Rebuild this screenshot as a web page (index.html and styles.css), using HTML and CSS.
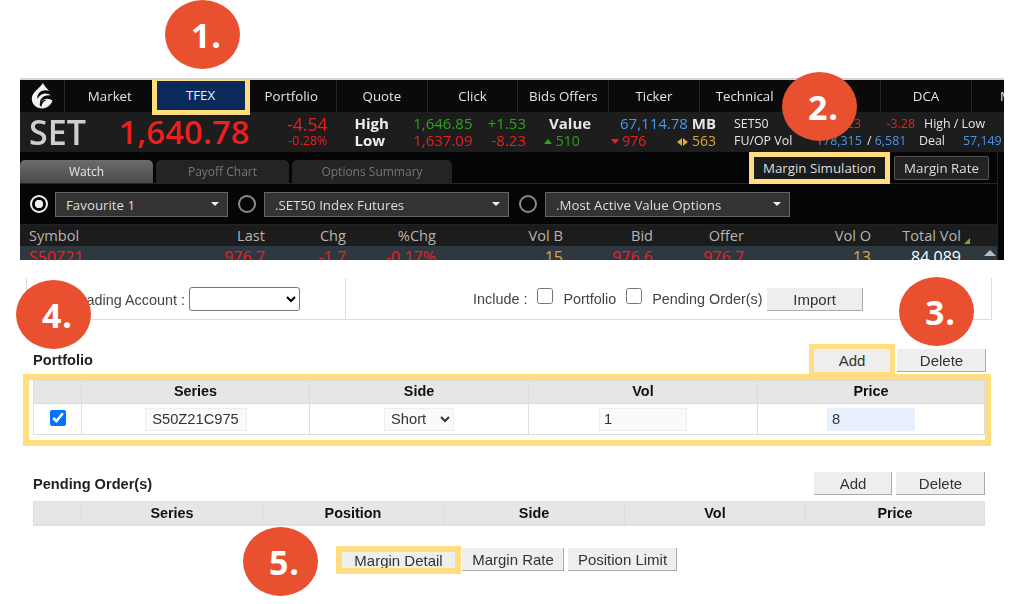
FILE: index.html
```html
<!DOCTYPE html>
<html lang="en">
<head>
<meta charset="utf-8">
<title>Margin Simulation</title>
<link rel="stylesheet" href="styles.css">
</head>
<body>
<div class="page">
  <section class="terminal">
    <nav class="nav">
      <div class="logo">
        <svg width="22" height="26" viewBox="0 0 22 26">
          <path fill="#f2f2f2" d="M12 0C13 3 16 5 18 8C15 6.500 11 7 8.500 9.500C6.500 11.500 6 14 6.500 16C7.500 13.500 10 11 13.500 10.500C16 10.200 18.500 11 20 12.500C16.500 11.800 12.500 13 10.500 15.500C9 17.300 8.800 19 9.200 20.500C10.500 18 13 16 16 15.800C18 15.700 20 16.400 21.500 17.800C20 22 16 25.500 11.500 25.500C5.500 25.500 .8 21.500 .8 15.800C.8 9.500 8 6 12 0Z"/>
          <path fill="#0a0a0a" d="M8.700 20.800C10 18.400 12.500 16.800 15.800 16.700C12.800 18 10.800 20.500 10.300 24C9.200 23.300 8.600 22 8.700 20.800Z"/>
        </svg>
      </div>
      <div class="nav-item">Market</div>
      <div class="nav-item"><span class="nav-active">TFEX</span></div>
      <div class="nav-item">Portfolio</div>
      <div class="nav-item">Quote</div>
      <div class="nav-item">Click</div>
      <div class="nav-item">Bids Offers</div>
      <div class="nav-item">Ticker</div>
      <div class="nav-item">Technical</div>
      <div class="nav-item"></div>
      <div class="nav-item">DCA</div>
      <div class="nav-item nav-cut">M</div>
    </nav>

    <div class="index">
      <div class="idx-name">SET</div>
      <div class="idx-price">1,640.78</div>
      <div class="idx-chg"><div class="red big">-4.54</div><div class="red small">-0.28%</div></div>
      <div class="idx-label"><div>High</div><div>Low</div></div>
      <div class="idx-val"><div class="green">1,646.85</div><div class="red">1,637.09</div></div>
      <div class="idx-diff"><div class="green">+1.53</div><div class="red">-8.23</div></div>
      <div class="idx-value">
        <div class="val-top"><b class="val-title">Value</b><span><span class="blue">67,114.78</span> <b>MB</b></span></div>
        <div class="val-bot">
          <span class="green"><i class="tri up"></i> 510</span>
          <span class="red"><i class="tri down"></i> 976</span>
          <span class="yellow"><i class="tri left"></i><i class="tri right"></i> 563</span>
        </div>
      </div>
      <div class="idx-set50">
        <div class="s-top"><span class="s-l">SET50</span><span class="red s-v">23</span><span class="red s-c">-3.28</span><span class="s-r">High / Low</span></div>
        <div class="s-bot"><span class="s-l">FU/OP Vol</span><span class="blue s-v"><span>178,315</span></span><span class="s-c"><span>/</span> <span class="blue">6,581</span></span><span class="s-d">Deal</span><span class="blue s-e">57,149</span></div>
      </div>
    </div>

    <div class="body">
      <div class="tabs">
        <div class="tab tab-on">Watch</div>
        <div class="tab">Payoff Chart</div>
        <div class="tab tab-wide">Options Summary</div>
        <div class="tab-actions">
          <button class="dark-btn dark-hl">Margin Simulation</button>
          <button class="dark-btn">Margin Rate</button>
        </div>
      </div>
      <div class="filters">
        <i class="radio radio-on"></i><div class="drop d1">Favourite 1</div>
        <i class="radio"></i><div class="drop d2">.SET50 Index Futures</div>
        <i class="radio"></i><div class="drop d3">.Most Active Value Options</div>
      </div>
      <div class="grid grid-head">
        <span class="left">Symbol</span><span>Last</span><span>Chg</span><span>%Chg</span><span>Vol B</span><span>Bid</span><span>Offer</span><span>Vol O</span><span class="sorted">Total Vol</span>
      </div>
      <div class="grid grid-row">
        <span class="left red">S50Z21</span><span class="red">976.7</span><span class="red">-1.7</span><span class="red">-0.17%</span><span class="yellow">15</span><span class="red">976.6</span><span class="red">976.7</span><span class="yellow">13</span><span class="white">84,089</span>
        <i class="scroll-up"></i>
      </div>
    </div>
  </section>

  <section class="account">
    <div class="acc-left">
      <label class="acc-label">Trading Account :</label>
      <select class="acc-select"><option></option></select>
    </div>
    <div class="acc-right">
      <span class="inc">Include :</span>
      <input type="checkbox" class="cb"><span class="inc-t">Portfolio</span>
      <input type="checkbox" class="cb"><span class="inc-t inc-p">Pending Order(s)</span>
      <button class="btn btn-import">Import</button>
    </div>
  </section>

  <section class="sheet">
    <div class="head head-port">
      <h2 class="title">Portfolio</h2>
      <div class="head-btns">
        <button class="btn btn-add btn-hl">Add</button>
        <button class="btn btn-del">Delete</button>
      </div>
    </div>
    <div class="frame">
      <table class="tbl tbl-port">
        <colgroup><col class="c1"><col class="c2"><col class="c3"><col class="c4"><col class="c5"></colgroup>
        <thead><tr><th></th><th>Series</th><th>Side</th><th>Vol</th><th>Price</th></tr></thead>
        <tbody>
          <tr>
            <td><input type="checkbox" class="cb cb-row" checked></td>
            <td><input class="field f-series" value="S50Z21C975"></td>
            <td><select class="field f-side"><option>Short</option></select></td>
            <td><input class="field f-vol" value="1"></td>
            <td><input class="field f-vol f-price" value="8"></td>
          </tr>
        </tbody>
      </table>
    </div>

    <div class="head head-pend">
      <h2 class="title">Pending Order(s)</h2>
      <div class="head-btns">
        <button class="btn btn-add">Add</button>
        <button class="btn btn-del">Delete</button>
      </div>
    </div>
    <table class="tbl tbl-pend">
      <colgroup><col class="p1"><col class="p2"><col class="p2"><col class="p2"><col class="p2"><col></colgroup>
      <thead><tr><th></th><th>Series</th><th>Position</th><th>Side</th><th>Vol</th><th>Price</th></tr></thead>
    </table>
    <div class="foot">
      <button class="btn f-detail">Margin Detail</button>
      <button class="btn f-rate">Margin Rate</button>
      <button class="btn f-limit">Position Limit</button>
    </div>
  </section>

  <div class="badge b1">1.</div>
  <div class="badge b2">2.</div>
  <div class="badge b3">3.</div>
  <div class="badge b4">4.</div>
  <div class="badge b5">5.</div>
</div>
</body>
</html>
```

FILE: styles.css
```css
* { box-sizing: border-box; }
html, body { margin: 0; padding: 0; background: #fff; }
.page { position: relative; width: 1024px; height: 604px; overflow: hidden; padding-top: 78px; font-family: "Liberation Sans", Arial, sans-serif; filter: blur(.3px); }

/* dark terminal */
.terminal { position: relative; margin-left: 20px; width: 984px; height: 182px; background: #050505; border-top: 2px solid #d4d4d4; overflow: hidden; font-family: "Open Sans", sans-serif; color: #e6e6e6; }
.nav { display: flex; height: 32px; background: #0a0a0a; }
.logo { width: 45px; flex: none; display: flex; align-items: center; justify-content: center; border-right: 1px solid #2c2c2c; }
.nav-item { width: 90.7px; flex: none; display: flex; align-items: center; justify-content: center; font-size: 13.3px; color: #e4e4e4; border-right: 1px solid #262626; }
.nav-cut { justify-content: flex-start; padding-left: 28px; border: 0; }
.nav-active { position: relative; z-index: 2; display: flex; align-items: center; justify-content: center; width: 88px; height: 29px; margin-top: -2px; background: #0a2a5c; color: #e6ecf4; outline: 5px solid #ffdd80; }

.index { display: flex; height: 40px; background: #1d1d1d; font-size: 15px; line-height: 17px; padding-top: 3px; }
.red { color: #f01e1e; }
.green { color: #2ea31a; }
.blue { color: #4a97ea; }
.yellow { color: #d9a92c; }
.white { color: #fff; }
.idx-name { width: 90px; margin-left: 9px; margin-top: -1px; font-size: 34px; line-height: 36px; font-weight: 600; color: #cfcfcf; }
.idx-price { width: 129px; margin-top: -1px; font-size: 33px; line-height: 36px; font-weight: 600; color: #f01e1e; white-space: nowrap; }
.idx-chg { width: 80px; text-align: right; }
.big { font-size: 17.5px; line-height: 18px; }
.small { font-size: 12.5px; line-height: 16px; }
.idx-label { width: 59px; margin-left: 27px; font-weight: 700; color: #eee; }
.idx-val { width: 58px; }
.idx-diff { width: 55px; text-align: right; }
.idx-value { width: 172px; margin-left: 18px; flex: none; }
.val-top { display: flex; justify-content: space-between; }
.val-title { margin-left: 5px; }
.val-bot { display: flex; justify-content: space-between; font-size: 14px; }
.tri { display: inline-block; width: 0; height: 0; vertical-align: 2px; border-style: solid; border-color: transparent; }
.tri.up { border-width: 0 4px 5px; border-bottom-color: #2ea31a; }
.tri.down { border-width: 5px 4px 0; border-top-color: #f01e1e; }
.tri.left { border-width: 4px 5px 4px 0; border-right-color: #d9a92c; vertical-align: 0; margin-right: 1px; }
.tri.right { border-width: 4px 0 4px 5px; border-left-color: #d9a92c; vertical-align: 0; }
.idx-set50 { margin-left: 18px; width: 270px; flex: none; font-size: 12.4px; white-space: nowrap; }
.s-top, .s-bot { display: flex; height: 17px; }
.s-l { width: 82px; flex: none; }
.s-top .s-v { width: 60px; padding-right: 15px; text-align: right; }
.s-top .s-c { width: 39px; text-align: right; }
.s-r { margin-left: 9px; }
.s-bot .s-v { width: 44px; flex: none; }
.s-bot .s-c { width: 44px; flex: none; margin-left: 7px; }
.s-d { margin-left: 8px; width: 44px; flex: none; }

.body { margin-right: 6px; border-right: 1px solid #222; height: 108px; }
.tabs { display: flex; align-items: flex-end; height: 32px; border-bottom: 1px solid #262626; font-size: 12px; }
.tab { width: 133px; height: 23px; margin-right: 3px; display: flex; align-items: center; justify-content: center; background: #242424; color: #777; border-radius: 5px 5px 0 0; }
.tab-on { background: linear-gradient(#6c6c6c, #4a4a4a); color: #e8e8e8; }
.tab-wide { width: 160px; margin-right: 0; }
.tab-actions { margin-left: auto; display: flex; align-items: center; gap: 9px; height: 31px; padding-right: 8px; }
.dark-btn { font-family: inherit; font-size: 13.3px; color: #ddd; height: 24px; width: 95px; padding: 0; background: #222; border: 1px solid #555; border-radius: 2px; }
.dark-hl { position: relative; width: 131px; height: 22px; background: #1c1c1c; border: 0; border-radius: 0; outline: 5px solid #ffdd80; }

.filters { display: flex; align-items: center; height: 41px; padding-left: 10px; border-bottom: 1px solid #222; }
.radio { width: 18px; height: 18px; flex: none; border-radius: 50%; border: 2px solid #8a8a8a; }
.radio-on { border-color: #eee; background: radial-gradient(circle, #eee 0 4px, transparent 4.500px); }
.drop { position: relative; height: 25px; margin-left: 8px; padding-left: 10px; background: #333; border: 1px solid #666; color: #ddd; font-size: 13.3px; line-height: 24px; }
.drop::after { content: ""; position: absolute; right: 8px; top: 9px; border-style: solid; border-width: 4px 4px 0; border-color: #eee transparent transparent; }
.d1 { width: 173px; margin-left: 7px; margin-right: 10px; }
.d2 { width: 245px; margin-right: 10px; }
.d3 { width: 245px; }

.grid { position: relative; display: grid; grid-template-columns: 100px 136px 81px 90px 127px 90px 91px 127px 90px; padding-left: 9px; }
.grid span { text-align: right; white-space: nowrap; }
.grid .left { text-align: left; }
.grid-head { height: 21px; background: #1c1c1c; font-size: 14.6px; line-height: 21px; color: #b4b4b4; }
.sorted { position: relative; }
.sorted::after { content: ""; position: absolute; right: -9px; bottom: 2px; border-style: solid; border-width: 0 0 6px 6px; border-color: transparent transparent #7aa82a; }
.grid-row { height: 20px; background: #2d3840; font-size: 16px; line-height: 23px; }
.scroll-up { position: absolute; left: 964px; top: 4px; border-style: solid; border-width: 0 6px 6px; border-color: transparent transparent #bbb; }

/* account bar */
.account { display: flex; margin: 18px 32px 0 26px; height: 42px; border: 1px solid #ddd; border-top: 0; font-size: 14.4px; color: #444; }
.acc-left { width: 319px; display: flex; align-items: flex-start; justify-content: flex-end; padding: 9px 45px 0 0; border-right: 1px solid #ddd; gap: 4px; }
.acc-label { line-height: 26px; }
.acc-select { width: 111px; height: 24px; background: #fff; border: 1px solid #767676; border-radius: 3px; }
.acc-right { display: flex; align-items: center; padding: 0 0 0 127px; height: 42px; }
.inc { margin-right: 10px; }
.cb { width: 16px; height: 16px; margin: -7px 0 0; flex: none; }
.inc-t { margin: 0 10px; }
.inc-p { margin-right: 4px; }
.btn { font-family: inherit; font-size: 15px; color: #333; background: #eee; border: 0; padding: 0; height: 23px; box-shadow: inset -1px -1px 0 #aaa; }
.btn-import { width: 96px; }

/* sheets */
.sheet { padding: 0 39px 0 33px; font-size: 14.6px; }
.head { display: flex; align-items: center; justify-content: space-between; }
.head-port { height: 24px; margin-top: 28px; }
.head-pend { height: 23px; margin-top: 26px; }
.title { margin: 0; font-size: 14.6px; font-weight: 700; color: #222; }
.head-btns { display: flex; gap: 7px; margin-right: -1px; }
.btn-add { width: 76px; }
.btn-del { width: 89px; }
.head-pend .head-btns { gap: 4px; margin-right: 0; }
.head-pend .btn-add { width: 78px; }
.btn-hl { position: relative; box-shadow: none; outline: 5px solid #ffdd80; z-index: 1; }
.frame { margin: 2px -6px 0 -10px; padding: 0 0 5px 4px; border: 6px solid #ffdd80; }
.tbl { width: 100%; border-collapse: collapse; table-layout: fixed; }
.tbl th { height: 23px; padding: 0 0 2px; background: #e6e6e6; border: 1px solid #dcdcdc; font-size: 14.4px; color: #111; }
.tbl td { height: 31px; padding: 0; text-align: center; border: 1px solid #ddd; }
.c1 { width: 48px; } .c2 { width: 228px; } .c3 { width: 219px; } .c4 { width: 229px; }
.p1 { width: 48px; } .p2 { width: 181px; }
.cb-row { margin: 0 0 2px; vertical-align: middle; }
.field { font-family: inherit; font-size: 14.7px; color: #333; background: #fafafa; border: 1px solid #eee; height: 23px; outline: 0; vertical-align: middle; }
.f-series { width: 102px; text-align: center; padding: 0; }
.f-side { width: 70px; padding: 0 0 0 2px; }
.f-vol { width: 88px; padding: 0 4px; }
.f-price { background: #e8f0fe; border-color: #e8f0fe; }
.tbl-pend { margin-top: 6px; border-top: 2px solid #e2e2e2; border-bottom: 2px solid #e2e2e2; }
.foot { display: flex; align-items: center; height: 23px; margin: 22px 0 0 309px; gap: 4px; }
.f-detail { width: 113px; height: 16px; margin-right: 3px; box-shadow: none; outline: 6px solid #ffdd80; position: relative; }
.f-rate { width: 102px; }
.f-limit { width: 109px; }

/* numbered markers */
.badge { position: absolute; z-index: 5; width: 75px; height: 69px; padding-left: 8px; border-radius: 50%; background: #e8502f; color: #fff; display: flex; align-items: center; justify-content: center; font-family: "Open Sans", sans-serif; font-weight: 700; font-size: 34px; letter-spacing: 1px; }
.b1 { left: 165px; top: 0; }
.b2 { left: 782px; top: 72px; }
.b3 { left: 899px; top: 277px; }
.b4 { left: 16px; top: 280px; }
.b5 { left: 243px; top: 527px; }
```
